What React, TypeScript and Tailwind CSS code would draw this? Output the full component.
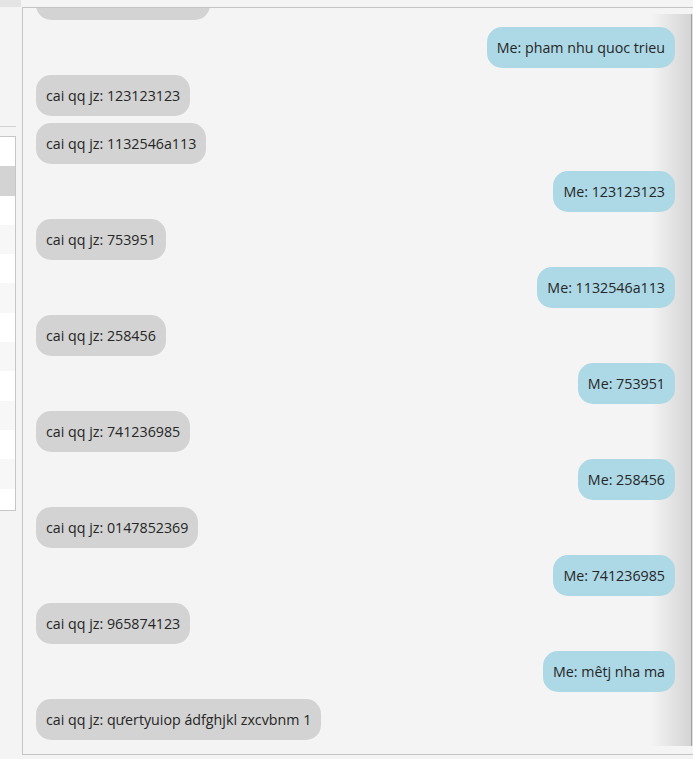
import React from "react";

type Msg = { me: boolean; text: string };

const messages: Msg[] = [
  { me: true, text: "Me: pham nhu quoc trieu" },
  { me: false, text: "cai qq jz: 123123123" },
  { me: false, text: "cai qq jz: 1132546a113" },
  { me: true, text: "Me: 123123123" },
  { me: false, text: "cai qq jz: 753951" },
  { me: true, text: "Me: 1132546a113" },
  { me: false, text: "cai qq jz: 258456" },
  { me: true, text: "Me: 753951" },
  { me: false, text: "cai qq jz: 741236985" },
  { me: true, text: "Me: 258456" },
  { me: false, text: "cai qq jz: 0147852369" },
  { me: true, text: "Me: 741236985" },
  { me: false, text: "cai qq jz: 965874123" },
  { me: true, text: "Me: mêtj nha ma" },
  { me: false, text: "cai qq jz: qưertyuiop ádfghjkl zxcvbnm 1" },
];

const rows = Array.from({ length: 13 }, (_, i) => i);

export default function App() {
  return (
    <div
      className="flex w-[693px] h-[759px] overflow-hidden bg-[#f4f4f4] text-[#262626]"
      style={{ fontFamily: '"Open Sans", "Noto Sans", sans-serif' }}
    >
      {/* left column */}
      <div className="w-[22px] shrink-0 flex flex-col">
        <div className="h-[7px] w-[21px] bg-[#e4e4e4]" />
        <div className="h-[119px]" />
        <div className="h-px w-[16px] bg-[#d2d2d2]" />
        <div className="h-[9px]" />
        <div className="w-[16px] h-[375px] border-t border-r border-b border-[#c6c6c6] bg-white flex flex-col overflow-hidden">
          {rows.map((i) => (
            <div
              key={i}
              className={
                "h-[29.3px] shrink-0 " +
                (i === 1 ? "bg-[#d3d3d3]" : i % 2 === 1 ? "bg-[#f7f7f7]" : "bg-white")
              }
            />
          ))}
        </div>
      </div>

      {/* chat panel */}
      <div className="relative mt-[7px] h-[748px] flex-1 border-t border-l border-b border-[#c4c4c4] overflow-hidden">
        {/* right shadow / scrollbar edge */}
        <div className="absolute top-[6px] bottom-[8px] right-[2px] w-[40px] bg-gradient-to-r from-transparent to-[#d4d4d4]" />
        <div className="absolute top-[6px] bottom-[8px] right-[1px] w-px bg-[#a0a0a0]" />
        <div className="absolute top-[6px] bottom-[8px] right-0 w-px bg-[#e2e2e2]" />

        <div className="relative flex flex-col gap-[7px] pl-[13px] pr-[18px] mt-[-29px]">
          <div className="flex justify-start">
            <div className="w-[174px] h-[41px] rounded-[15px] bg-[#d3d3d3]" />
          </div>
          {messages.map((m, i) => (
            <div key={i} className={"flex " + (m.me ? "justify-end" : "justify-start")}>
              <div
                className={
                  "rounded-[15px] px-[10px] py-[10px] text-[14.25px] leading-[21px] whitespace-nowrap " +
                  (m.me ? "bg-[#add8e6]" : "bg-[#d3d3d3]")
                }
              >
                {m.text}
              </div>
            </div>
          ))}
        </div>
      </div>
    </div>
  );
}
